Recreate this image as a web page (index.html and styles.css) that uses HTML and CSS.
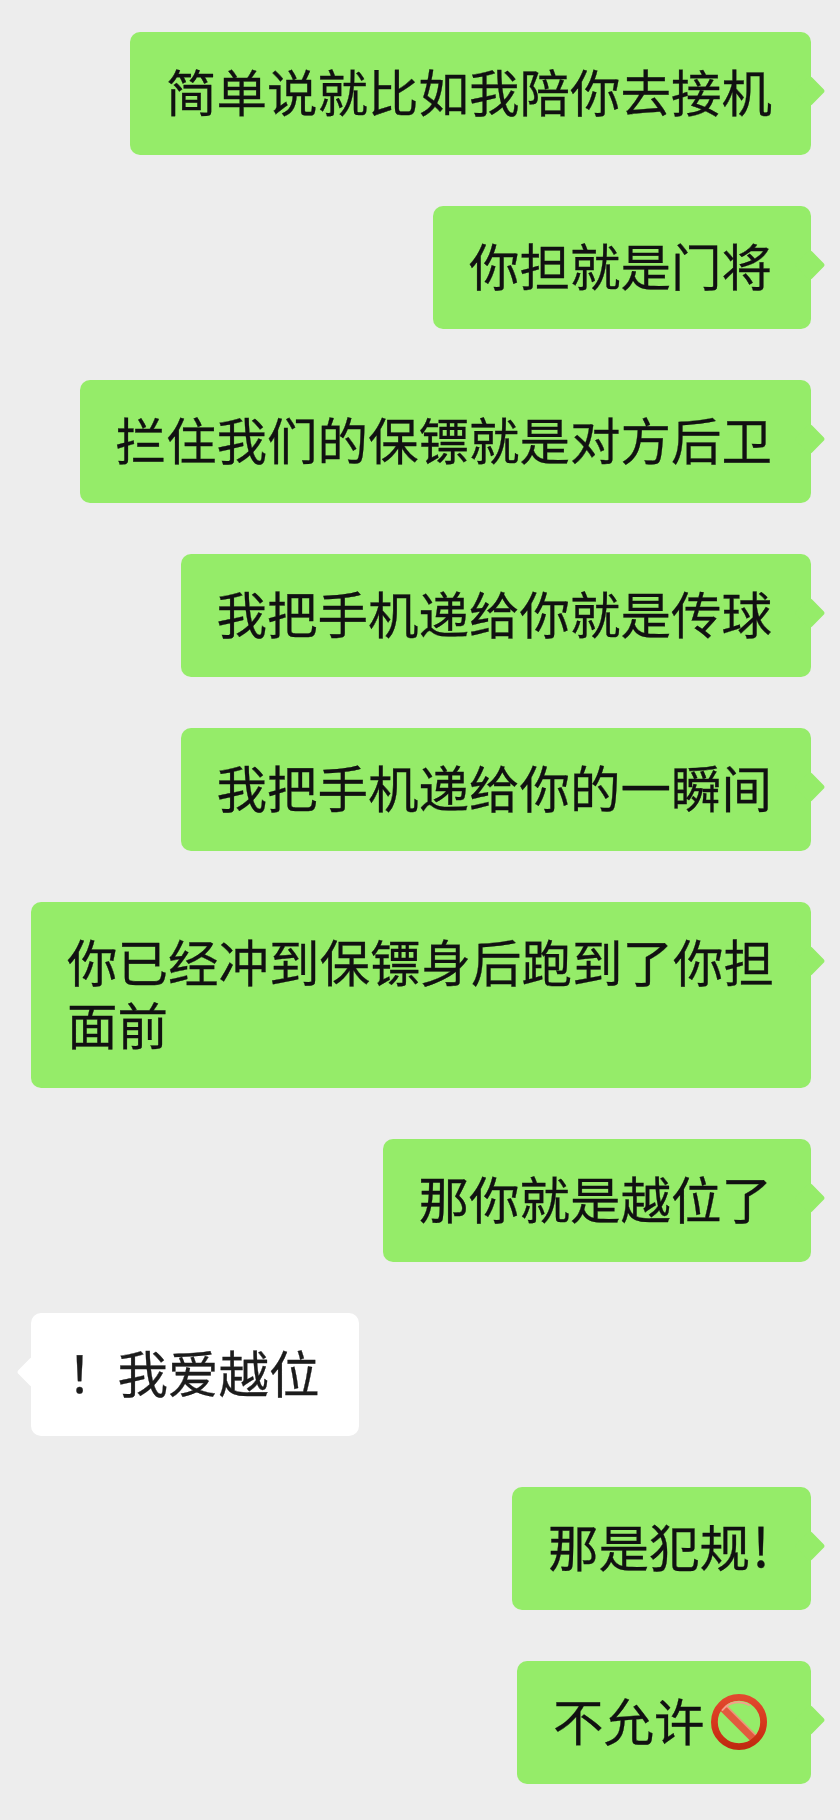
FILE: index.html
```html
<!DOCTYPE html>
<html lang="zh-CN">
<head>
<meta charset="utf-8">
<title>聊天记录</title>
<link rel="stylesheet" href="styles.css">
</head>
<body>
<main class="chat">
  <div class="row row-me"><div class="bubble me">简单说就比如我陪你去接机</div></div>
  <div class="row row-me"><div class="bubble me">你担就是门将</div></div>
  <div class="row row-me"><div class="bubble me">拦住我们的保镖就是对方后卫</div></div>
  <div class="row row-me"><div class="bubble me">我把手机递给你就是传球</div></div>
  <div class="row row-me"><div class="bubble me">我把手机递给你的一瞬间</div></div>
  <div class="row row-me"><div class="bubble me wide">你已经冲到保镖身后跑到了你担面前</div></div>
  <div class="row row-me"><div class="bubble me">那你就是越位了</div></div>
  <div class="row row-you"><div class="bubble you">！我爱越位</div></div>
  <div class="row row-me"><div class="bubble me">那是犯规<span class="bang">!</span></div></div>
  <div class="row row-me"><div class="bubble me">不允许<svg class="emoji" viewBox="0 0 56 56" role="img" aria-label="禁止"><defs><linearGradient id="ring" x1="0" y1="0" x2="0" y2="1"><stop offset="0" stop-color="#e2492e"/><stop offset="0.55" stop-color="#d5361b"/><stop offset="1" stop-color="#c02a10"/></linearGradient></defs><path d="M10 12 L44 46" stroke="#e25a3e" stroke-width="8"/><path d="M13 9.5 L47 43.5" stroke="#f0927c" stroke-width="1.6"/><circle cx="28" cy="28" r="24.6" fill="none" stroke="url(#ring)" stroke-width="6.8"/><path d="M11.5 16 A20.5 20.5 0 0 1 38 11" fill="none" stroke="#f3a08b" stroke-width="2" stroke-linecap="round"/></svg></div></div>
</main>
</body>
</html>
```
FILE: styles.css
```css
* { box-sizing: border-box; }
html, body { margin: 0; padding: 0; }
body {
  width: 840px;
  height: 1820px;
  overflow: hidden;
  background: #ededed;
  font-family: "Noto Sans CJK SC", "Liberation Sans", sans-serif;
}
.chat {
  display: flex;
  flex-direction: column;
  gap: 51px;
  padding: 32px 29px 0 31px;
}
.row { display: flex; }
.row-me { justify-content: flex-end; }
.row-you { justify-content: flex-start; }
.bubble {
  position: relative;
  padding: 27px 39px 33px 36px;
  font-size: 50.5px;
  line-height: 63px;
  border-radius: 10px;
  color: #111;
  -webkit-text-stroke: 0.3px currentColor;
}
.me { background: #95ec69; }
.you { background: #fff; color: #1c1c1c; }
.wide { width: 780px; padding-right: 35px; }
.bubble::after {
  content: "";
  position: absolute;
  top: 48px;
  width: 22px;
  height: 22px;
  border-radius: 3px;
  background: inherit;
  transform: rotate(45deg);
}
.me::after { right: -10px; }
.you::after { left: -10px; }
.bang { display: inline-block; width: 22px; text-align: center; font-size: 54px; line-height: 60px; }
.emoji {
  display: inline-block;
  width: 56px;
  height: 56px;
  margin: 0 5px 0 6.5px;
  vertical-align: -9px;
}
```
